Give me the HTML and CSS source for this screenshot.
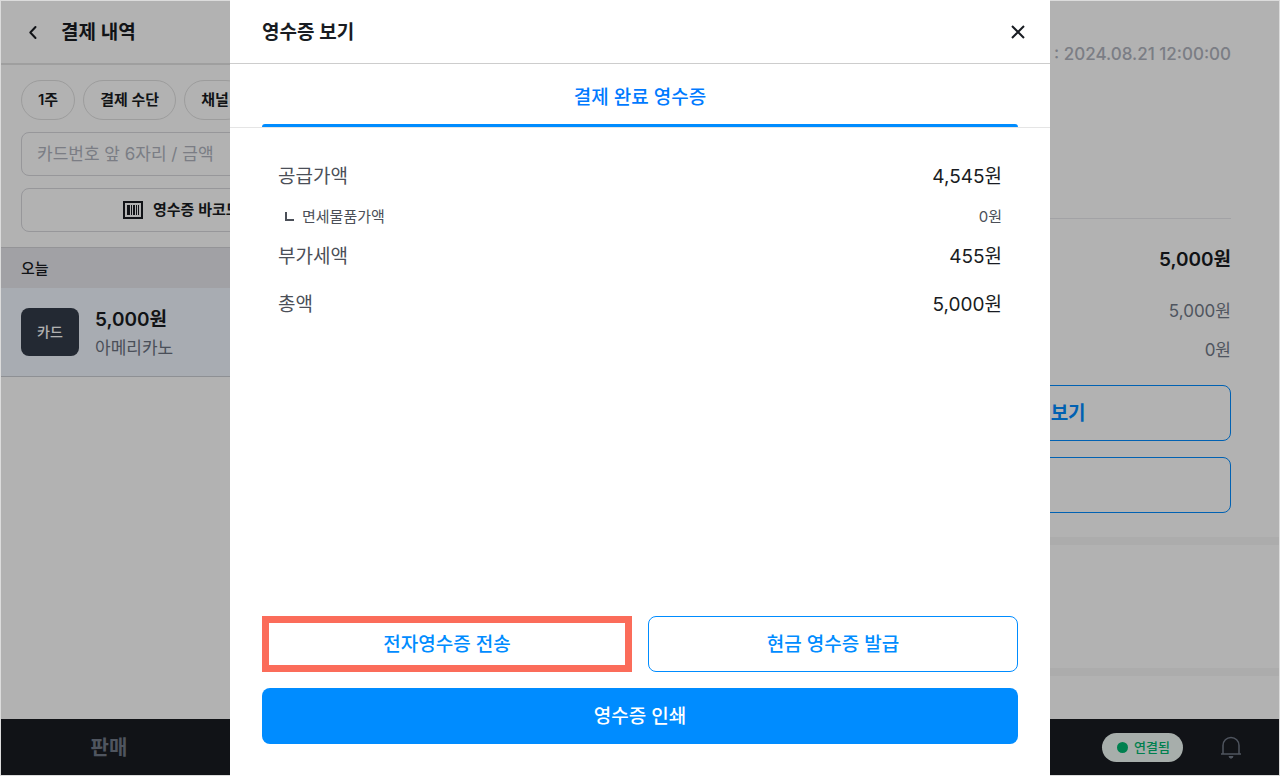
FILE: index.html
```html
<!DOCTYPE html>
<html lang="ko">
<head>
<meta charset="utf-8">
<meta name="viewport" content="width=device-width, initial-scale=1">
<title>영수증 보기</title>
<link rel="stylesheet" href="styles.css">
</head>
<body>
<div class="frame">
  <div class="app" aria-hidden="true">
    <div class="panes">
      <aside class="history">
        <header class="history-header">
          <button class="icon-button" type="button" aria-label="뒤로">
            <svg width="24" height="24" viewBox="0 0 24 24" fill="none" stroke="currentColor" stroke-width="2" stroke-linecap="round" stroke-linejoin="round"><path d="M14.500 7 9.300 12.500l5.200 5.500"/></svg>
          </button>
          <h1 class="title">결제 내역</h1>
        </header>
        <div class="filters">
          <div class="chips">
            <button class="chip" type="button">1주</button>
            <button class="chip" type="button">결제 수단</button>
            <button class="chip" type="button">채널</button>
          </div>
          <input class="search" type="text" aria-label="검색" placeholder="카드번호 앞 6자리 / 금액">
          <button class="barcode" type="button">
            <svg width="20" height="18" viewBox="0 0 20 18"><path d="M1 1h18v16H1z" fill="none" stroke="currentColor" stroke-width="2"/><path d="M4 4h3v10H4zM8 4h1v10H8zM10 4h2v10h-2zM13 4h1v10h-1zM15 4h1v10h-1z" fill="currentColor"/></svg>
            영수증 바코드 조회
          </button>
        </div>
        <h2 class="day">오늘</h2>
        <div class="payment">
          <span class="method">카드</span>
          <div class="payment-text">
            <strong class="payment-amount">5,000원</strong>
            <span class="payment-item">아메리카노</span>
          </div>
        </div>
      </aside>
      <main class="detail">
        <section class="detail-top">
          <p class="date">: 2024.08.21 12:00:00</p>
          <div class="sums">
            <p class="sum-total">5,000원</p>
            <p class="sum">5,000원</p>
            <p class="sum">0원</p>
          </div>
          <div class="detail-actions">
            <button class="outline outline-strong" type="button">영수증 보기</button>
            <button class="outline" type="button" aria-label="결제 상세"></button>
          </div>
        </section>
        <section class="detail-block"></section>
        <section class="detail-rest"></section>
      </main>
    </div>
    <nav class="bottom-bar">
      <a class="nav-link" href="#sale">판매</a>
      <div class="status">
        <span class="connected"><span class="dot"></span>연결됨</span>
        <button class="icon-button" type="button" aria-label="알림">
          <svg width="24" height="24" viewBox="0 0 24 24" fill="none" stroke="currentColor" stroke-width="1.500"><path d="M4 19v-8.500a8 8 0 0 1 16 0V19"/><path d="M2 19h20"/><path d="M10 21.500h4l-1 1.500h-2z" fill="currentColor" stroke-width="1"/></svg>
        </button>
      </div>
    </nav>
  </div>
  <div class="scrim"></div>

  <div class="modal" role="dialog" aria-modal="true" aria-labelledby="modal-title">
    <header class="modal-header">
      <h2 class="title" id="modal-title">영수증 보기</h2>
      <button class="close" type="button" aria-label="닫기">
        <svg width="16" height="16" viewBox="0 0 16 16" fill="none" stroke="currentColor" stroke-width="2"><path d="m2 2 12 12M14 2 2 14"/></svg>
      </button>
    </header>
    <div class="tabs" role="tablist">
      <button class="tab" type="button" role="tab" aria-selected="true">결제 완료 영수증</button>
    </div>
    <dl class="receipt">
      <div class="row"><dt>공급가액</dt><dd>4,545원</dd></div>
      <div class="row row-sub">
        <dt><svg width="10" height="10" viewBox="0 0 10 10" fill="none" stroke="currentColor" stroke-width="2"><path d="M2 0v8h8"/></svg>면세물품가액</dt>
        <dd>0원</dd>
      </div>
      <div class="row"><dt>부가세액</dt><dd>455원</dd></div>
      <div class="row"><dt>총액</dt><dd>5,000원</dd></div>
    </dl>
    <footer class="modal-actions">
      <button class="outline highlighted" type="button">전자영수증 전송</button>
      <button class="outline" type="button">현금 영수증 발급</button>
      <button class="primary" type="button">영수증 인쇄</button>
    </footer>
  </div>
</div>
</body>
</html>
```
FILE: styles.css
```css
* {
  box-sizing: border-box;
}

body,
h1,
h2,
p,
dl,
dd {
  margin: 0;
}

body {
  font-family: Inter, "Noto Sans CJK KR", sans-serif;
  font-size: 19px;
  line-height: 28px;
  color: #191c22;
}

button,
input {
  font: inherit;
  color: inherit;
}

button {
  padding: 0;
  border: 0;
  background: none;
  cursor: pointer;
}

svg {
  display: block;
  flex: none;
}

.frame {
  position: relative;
  min-height: 100vh;
  display: flex;
  border: 1px solid #dcdcdc;
}

.scrim {
  position: absolute;
  inset: 0;
  background: rgba(0, 0, 0, 0.3);
}

.app {
  flex: 1;
  display: flex;
  flex-direction: column;
  background: #fff;
}

.panes {
  flex: 1;
  display: grid;
  grid-template-columns: 392px 1fr;
}

.title {
  padding-top: 2px;
  font-size: 19px;
  font-weight: 600;
}

/* Payment history */

.history-header {
  display: flex;
  align-items: center;
  gap: 16px;
  height: 64px;
  padding: 0 20px;
  border-bottom: 2px solid #e4e4e4;
}

.icon-button {
  width: 24px;
  height: 24px;
}

.filters {
  display: flex;
  flex-direction: column;
  gap: 12px;
  padding: 15px 20px;
}

.chips {
  display: flex;
  gap: 8px;
}

.chip {
  height: 40px;
  padding: 0 16px;
  border: 1px solid #e0e0e0;
  border-radius: 20px;
  font-size: 15px;
  font-weight: 600;
}

.search,
.barcode {
  height: 44px;
  border: 1px solid #d8d8dd;
  border-radius: 8px;
}

.search {
  width: 100%;
  padding: 0 15px;
  background: none;
  font-size: 17px;
}

.search::placeholder {
  color: #b0b4be;
  opacity: 1;
}

.barcode {
  display: flex;
  align-items: center;
  justify-content: center;
  gap: 10px;
  font-size: 15px;
  font-weight: 600;
}

.day {
  height: 41px;
  padding: 0 20px;
  border-top: 1px solid #d4d4d8;
  background: #e7e7ec;
  font-size: 15px;
  font-weight: 500;
  line-height: 42px;
}

.payment {
  display: flex;
  align-items: center;
  gap: 16px;
  height: 89px;
  padding: 0 20px;
  border-bottom: 1px solid #ccced4;
  background: #f1f7ff;
}

.method {
  width: 58px;
  border-radius: 8px;
  background: #333b49;
  color: #fff;
  font-size: 14px;
  font-weight: 500;
  line-height: 48px;
  text-align: center;
}

.payment-text {
  display: flex;
  flex-direction: column;
  padding-top: 4px;
}

.payment-amount {
  font-weight: 600;
}

.payment-item {
  color: #6b7280;
  font-size: 17px;
}

/* Payment detail */

.detail {
  display: flex;
  flex-direction: column;
}

.detail-top {
  padding: 39px 48px 24px;
}

.date {
  height: 179px;
  border-bottom: 1px solid #e9e9ec;
  color: #b0b4be;
  font-size: 17px;
  font-weight: 500;
  text-align: right;
}

.sums {
  display: flex;
  flex-direction: column;
  padding: 21px 0 15px;
  text-align: right;
}

.sum-total {
  margin-bottom: 12px;
  font-weight: 600;
  line-height: 40px;
}

.sum {
  color: #727a88;
  font-size: 17px;
  line-height: 39px;
}

.detail-actions {
  display: grid;
  grid-template-columns: 1fr 1fr;
  gap: 16px;
  padding-left: 8px;
}

.detail-actions .outline {
  grid-column: 2;
}

.detail-block {
  height: 131px;
  border-top: 8px solid #f6f6f6;
}

.detail-rest {
  flex: 1;
  border-top: 8px solid #f6f6f6;
}

/* Bottom bar */

.bottom-bar {
  display: flex;
  align-items: center;
  justify-content: space-between;
  height: 56px;
  padding-right: 36px;
  background: #191c22;
  color: #727a88;
}

.nav-link {
  width: 216px;
  padding-top: 2px;
  color: inherit;
  font-size: 20px;
  font-weight: 600;
  text-align: center;
  text-decoration: none;
}

.status {
  display: flex;
  align-items: center;
  gap: 36px;
}

.connected {
  display: flex;
  align-items: center;
  gap: 6px;
  padding: 0 13px 0 15px;
  border-radius: 15px;
  background: #f0faf5;
  color: #00b871;
  font-size: 13px;
  font-weight: 500;
  line-height: 29px;
}

.dot {
  width: 11px;
  height: 11px;
  border-radius: 50%;
  background: currentColor;
}

/* Receipt modal */

.modal {
  position: absolute;
  top: -1px;
  bottom: -1px;
  left: 0;
  right: 0;
  width: 820px;
  max-width: 100%;
  margin: 0 auto;
  display: flex;
  flex-direction: column;
  background: #fff;
}

.modal-header {
  display: flex;
  align-items: center;
  justify-content: space-between;
  height: 64px;
  padding: 0 24px 0 32px;
  border-bottom: 1px solid #cdcdcd;
}

.close {
  width: 16px;
  height: 16px;
}

.tabs {
  display: flex;
  height: 64px;
  padding: 0 32px;
  border-bottom: 1px solid #e5e5e5;
}

.tab {
  position: relative;
  flex: 1;
  padding-top: 4px;
  color: #007aff;
  font-weight: 500;
}

.tab::after {
  content: "";
  position: absolute;
  left: 0;
  right: 0;
  bottom: 0;
  height: 3px;
  border-radius: 3px 3px 0 0;
  background: #008cff;
}

.receipt {
  flex: 1;
  padding: 24px 48px;
}

.row {
  display: flex;
  align-items: center;
  justify-content: space-between;
  height: 48px;
  padding-top: 2px;
}

.row dt {
  display: flex;
  align-items: center;
  gap: 8px;
  color: #4b4f58;
}

.row-sub {
  height: 32px;
  color: #4b4f58;
  font-size: 15px;
}

.row-sub dt {
  padding-left: 6px;
}

.modal-actions {
  display: grid;
  grid-template-columns: 1fr 1fr;
  gap: 16px;
  padding: 0 32px 32px;
}

.outline,
.primary {
  height: 56px;
  padding-top: 2px;
  border-radius: 8px;
  font-weight: 500;
}

.outline {
  border: 1px solid #008cff;
  color: #008cff;
}

.outline-strong {
  font-weight: 600;
}

.highlighted {
  border: 7px solid #fb6c5a;
  border-radius: 0;
}

.primary {
  grid-column: 1 / -1;
  background: #008cff;
  color: #fff;
}
```
